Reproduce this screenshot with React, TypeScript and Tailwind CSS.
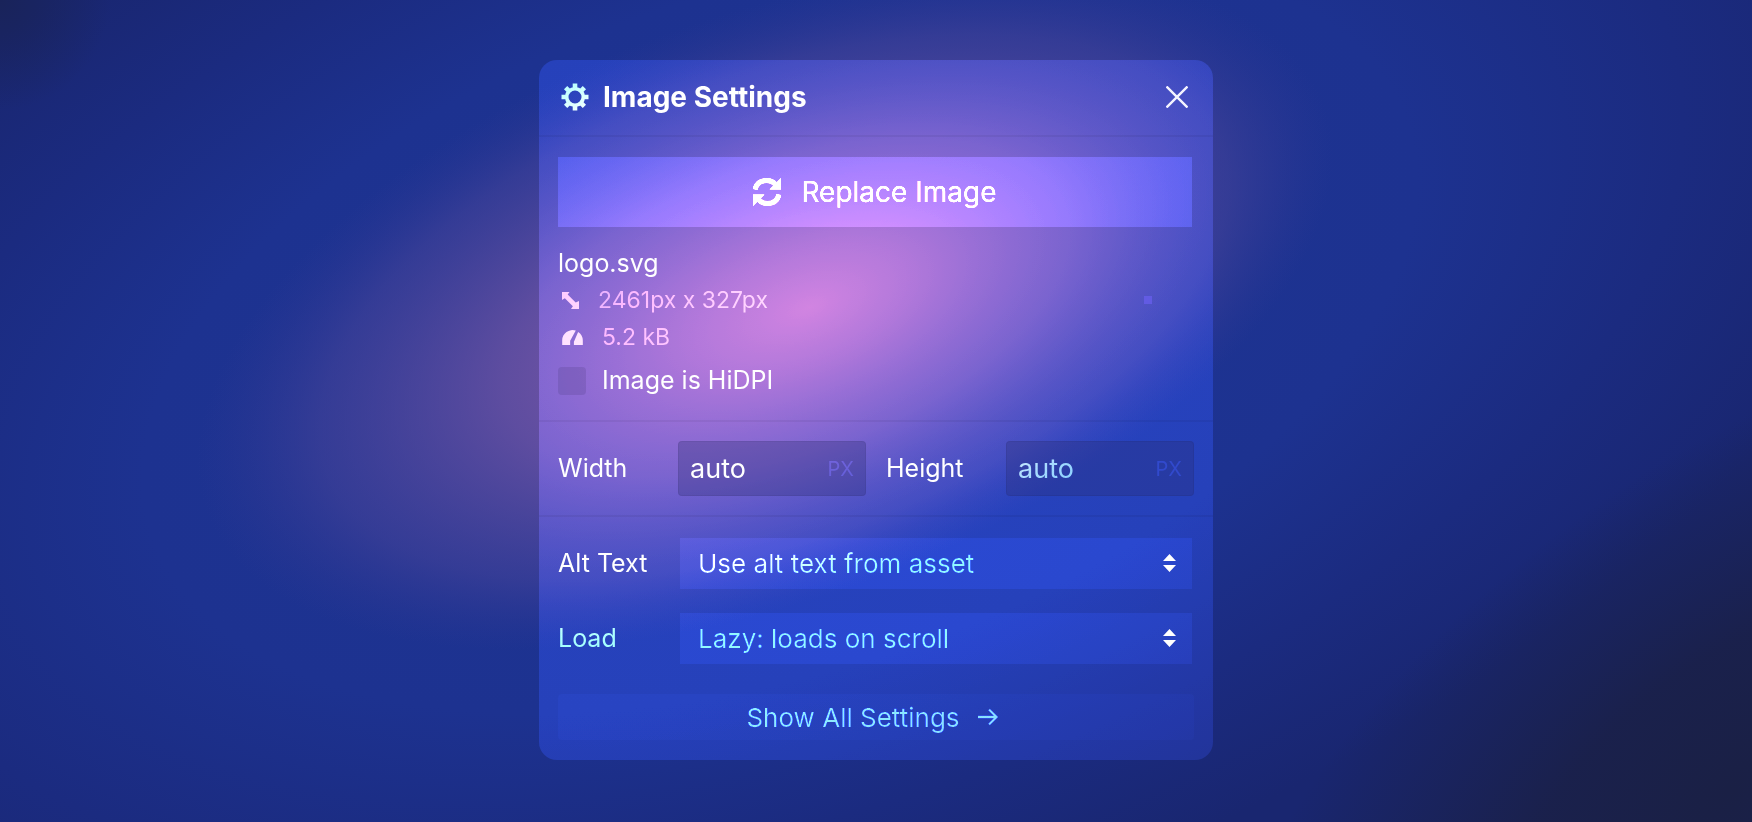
import type { ReactNode } from "react"

function Backdrop() {
  return (
    <svg className="absolute inset-0 h-full w-full" viewBox="0 0 1752 822" preserveAspectRatio="none" aria-hidden="true">
      <defs>
        <radialGradient id="base" gradientUnits="userSpaceOnUse" cx="0" cy="0" r="1" gradientTransform="translate(780 330) rotate(-18) scale(1200 620)">
          <stop offset="0" stopColor="#1e3594" />
          <stop offset="0.55" stopColor="#1d3290" />
          <stop offset="0.78" stopColor="#1b2b80" />
          <stop offset="1" stopColor="#192670" />
        </radialGradient>
        <radialGradient id="shade" gradientUnits="userSpaceOnUse" cx="0" cy="0" r="1" gradientTransform="translate(1730 790) rotate(-38) scale(620 310)">
          <stop offset="0" stopColor="#1a2045" />
          <stop offset="0.4" stopColor="#1a2048" stopOpacity="0.9" />
          <stop offset="1" stopColor="#1a2048" stopOpacity="0" />
        </radialGradient>
        <radialGradient id="corner" gradientUnits="userSpaceOnUse" cx="0" cy="0" r="110">
          <stop offset="0" stopColor="#192250" stopOpacity="0.7" />
          <stop offset="1" stopColor="#192250" stopOpacity="0" />
        </radialGradient>
        <radialGradient id="glow" gradientUnits="userSpaceOnUse" cx="0" cy="0" r="1" fx="0.07" fy="0.05" gradientTransform="translate(765 308) rotate(-20) scale(595 292)">
          <stop offset="0" stopColor="#a266ae" />
          <stop offset="0.2" stopColor="#8f5faa" stopOpacity="0.94" />
          <stop offset="0.5" stopColor="#7054a4" stopOpacity="0.78" />
          <stop offset="0.8" stopColor="#54489c" stopOpacity="0.42" />
          <stop offset="0.93" stopColor="#443f98" stopOpacity="0.14" />
          <stop offset="1" stopColor="#3c3c98" stopOpacity="0" />
        </radialGradient>
      </defs>
      <rect width="1752" height="822" fill="url(#base)" />
      <rect width="1752" height="822" fill="url(#shade)" />
      <rect width="1752" height="822" fill="url(#corner)" />
      <rect width="1752" height="822" fill="url(#glow)" />
    </svg>
  )
}

function GearIcon() {
  return (
    <svg viewBox="0 0 28 28" className="h-7 w-7 mix-blend-color-dodge" fill="none" stroke="#c8c8c8" aria-hidden="true">
      <circle cx="14" cy="14" r="8.300" strokeWidth="3.600" />
      <g strokeWidth="4.600">
        <path d="M14 0.500v5M14 22.500v5M0.500 14h5M22.500 14h5" />
        <path d="M4.600 4.600l3.500 3.500M19.900 19.900l3.500 3.500M4.600 23.400l3.500-3.500M19.900 8.100l3.500-3.500" />
      </g>
    </svg>
  )
}

function RefreshIcon() {
  return (
    <svg viewBox="0 0 28 28" className="h-7 w-7" fill="none" stroke="currentColor" aria-hidden="true">
      <path d="M2 11.500C3.500 5.500 8 2.500 13.500 2.500c4 0 7 1.500 9 4" strokeWidth="5" />
      <path d="M26 16.500c-1.500 6-6 9-11.500 9c-4 0-7-1.500-9-4" strokeWidth="5" />
      <path d="M28 0v11.500H16.500z" fill="currentColor" stroke="none" />
      <path d="M0 28V16.500h11.500z" fill="currentColor" stroke="none" />
    </svg>
  )
}

function ResizeIcon() {
  return (
    <svg viewBox="0 0 18 18" className="h-[17px] w-[17px] mix-blend-color-dodge" fill="#808080" aria-hidden="true">
      <path d="M0 0h8L6 2.700l8.500 8.500L18 9.500V18H9.500l2-3L3 6.500L0 8.500z" />
    </svg>
  )
}

function GaugeIcon() {
  return (
    <svg viewBox="0 0 22 16" className="h-[15px] w-[21px] mix-blend-color-dodge" fill="#888888" aria-hidden="true">
      <path d="M0 16V11A11 11 0 0 1 14.500 0.600L8.500 11.500V16zM17 2.200A11 11 0 0 1 22 11v5h-9.500v-3.500z" />
    </svg>
  )
}

function Select({ id, value }: { id: string; value: string }) {
  return (
    <div className="relative mr-0.5 flex-1">
      <select
        id={id}
        className="block h-[51px] w-full appearance-none bg-[#1a1a1a] pl-[18px] text-[26px] text-[#bcbcbc] mix-blend-color-dodge outline-none"
      >
        <option>{value}</option>
      </select>
      <svg viewBox="0 0 13 18" className="pointer-events-none absolute top-4 right-4 h-[18px] w-[13px]" fill="#fff" aria-hidden="true">
        <path d="M6.500 0L13 7H0zM6.500 18L13 11H0z" />
      </svg>
    </div>
  )
}

function SizeField({ id, label }: { id: string; label: string }) {
  return (
    <div className="flex flex-1 items-center">
      <label htmlFor={id} className="w-30 text-[25px] text-[#c4c4c4] mix-blend-color-dodge">
        {label}
      </label>
      <div className="flex h-[55px] min-w-0 flex-1 items-center rounded border border-black/5 bg-[#2a2b6e]/30 px-[11px]">
        <input
          id={id}
          defaultValue="auto"
          className="w-full min-w-0 bg-transparent pt-0.5 text-[27px] text-[#b8b8b8] mix-blend-color-dodge outline-none"
        />
        <span className="text-xl text-[#343434] mix-blend-color-dodge">PX</span>
      </div>
    </div>
  )
}

function Section({ children }: { children: ReactNode }) {
  return <section className="border-t-2 border-black/5 px-[19px]">{children}</section>
}

export default function App() {
  return (
    <main className="relative isolate flex min-h-screen items-start justify-center overflow-hidden bg-[#1c2f8a] px-4 pt-15 pb-10 font-['Inter',sans-serif]">
      <Backdrop />
      <div className="relative w-full max-w-[674px]">
        <div className="absolute inset-0 rounded-[18px] bg-[#3a3a3a] mix-blend-color-dodge" />
        <div className="relative">
          <header className="flex h-[75px] items-center gap-3.5 px-[22px] pb-0.5">
            <GearIcon />
            <h1 className="flex-1 text-[28px] font-bold text-[#d0d0d0] mix-blend-color-dodge">Image Settings</h1>
            <button aria-label="Close" className="flex h-7 w-7 items-center justify-center">
              <svg viewBox="0 0 22 22" className="h-[22px] w-[22px]" stroke="#f4f4ff" strokeWidth="2.400" aria-hidden="true">
                <path d="M0.500 0.500l21 21M21.500 0.500L0.500 21.500" />
              </svg>
            </button>
          </header>

          <Section>
            <div className="pr-0.5 pt-5">
              <button className="flex h-[70px] w-full items-center justify-center gap-5 bg-[#2e2e2e] text-[28px] text-[#f0f0f0] mix-blend-color-dodge">
                <RefreshIcon />
                Replace Image
              </button>
            </div>
            <p className="mt-[18px] text-[25px] leading-9 text-[#c8c8c8] mix-blend-color-dodge">logo.svg</p>
            <div className="flex h-[38px] items-center gap-[19px] pl-1">
              <ResizeIcon />
              <span className="flex-1 text-[23px] text-[#686868] mix-blend-color-dodge">2461px x 327px</span>
              <span className="mr-[42px] h-2 w-2 bg-[#6a60f0]/70" />
            </div>
            <div className="flex h-9 items-center gap-[19px] pl-1">
              <GaugeIcon />
              <span className="text-[23px] text-[#686868] mix-blend-color-dodge">5.2 kB</span>
            </div>
            <label className="mt-1 mb-[17px] flex h-11 items-center gap-4 text-[25px]">
              <input type="checkbox" className="h-7 w-7 appearance-none rounded bg-[#443878]/20" />
              <span className="text-[#c8c8c8] mix-blend-color-dodge">Image is HiDPI</span>
            </label>
          </Section>

          <Section>
            <div className="flex gap-5 py-[19px]">
              <SizeField id="width" label="Width" />
              <SizeField id="height" label="Height" />
            </div>
          </Section>

          <Section>
            <div className="flex items-center pt-[21px]">
              <label htmlFor="alt" className="w-[122px] text-[25px] text-[#c4c4c4] mix-blend-color-dodge">
                Alt Text
              </label>
              <Select id="alt" value="Use alt text from asset" />
            </div>
            <div className="flex items-center pt-6">
              <label htmlFor="load" className="w-[122px] text-[25px] text-[#c4c4c4] mix-blend-color-dodge">
                Load
              </label>
              <Select id="load" value="Lazy: loads on scroll" />
            </div>
            <div className="pt-[30px] pb-5">
              <button className="flex h-[46px] w-full items-center justify-center gap-[18px] rounded bg-[#0a0a0a] pr-2 text-[26px] text-[#bcbcbc] mix-blend-color-dodge">
                Show All Settings
                <svg viewBox="0 0 20 18" className="h-[18px] w-5" fill="none" stroke="currentColor" strokeWidth="2.400" aria-hidden="true">
                  <path d="M0 9h18M11 1.500L18.500 9L11 16.500" />
                </svg>
              </button>
            </div>
          </Section>
        </div>
      </div>
    </main>
  )
}
